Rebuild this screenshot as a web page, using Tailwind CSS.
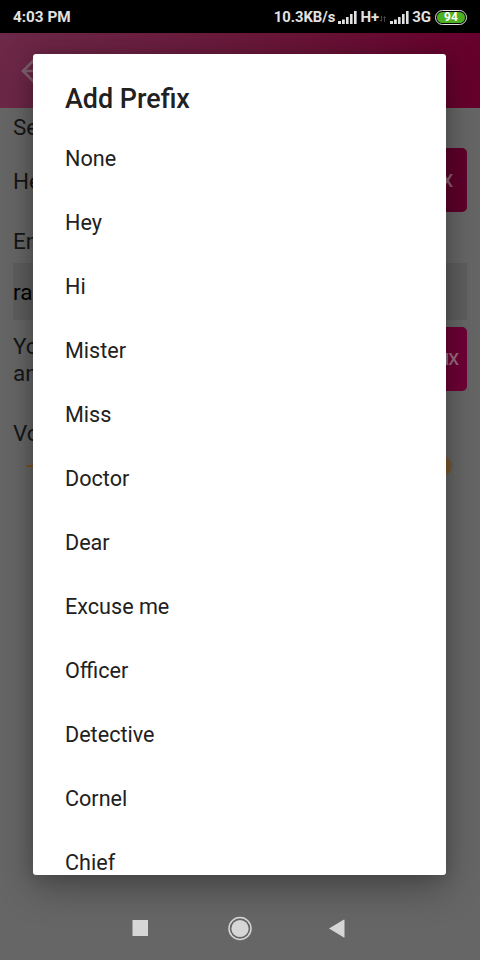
<!DOCTYPE html>
<html lang="en">
<head>
    <meta charset="UTF-8">
    <meta name="viewport" content="width=device-width, initial-scale=1.0">
    <title>Add Prefix</title>
    <script src="https://cdn.jsdelivr.net/npm/@tailwindcss/browser@4"></script>
</head>
<body class="relative w-[480px] h-[960px] overflow-hidden flex flex-col bg-[#666666] font-['Roboto',sans-serif] text-[#161616]">
    <!-- status bar -->
    <div id="status-bar" class="h-[33px] shrink-0 bg-black text-[#e2e2e2] flex items-center justify-between pl-[13px] pr-[13px] pt-px text-[15.3px] font-bold leading-none whitespace-nowrap">
        <span class="pt-[2px]">4:03 PM</span>
        <div class="flex items-center">
            <span class="text-[14.8px]">10.3KB/s</span>
            <svg class="w-[19px] h-[14px] ml-[3px]" viewBox="0 0 19 14" fill="currentColor"><path d="M0 11h3v3H0zM4 9.500h2.800V14H4zM8 7h2.600v7H8zM12 4h2.600v10H12zM16 1h2.600v13H16z"/></svg>
            <span class="ml-[3px] text-[15px]">H+</span>
            <svg class="w-[6px] h-[6px] mt-1 ml-[1px]" viewBox="0 0 6 6" fill="none" stroke="#444444"><path d="M1.500 0v5M0 4l1.500 1.500M4.500 6V1M3.500 1.500L4.500 .5 6 2"/></svg>
            <svg class="w-[19px] h-[14px] ml-[4px]" viewBox="0 0 19 14" fill="currentColor"><path d="M0 11h3v3H0zM4 9.500h2.800V14H4zM8 7h2.600v7H8zM12 4h2.600v10H12zM16 1h2.600v13H16z"/></svg>
            <span class="ml-[3px] text-[15px]">3G</span>
            <span class="ml-[4px] w-[32px] h-[15px] rounded-full border border-[#e2e2e2] bg-black p-[1px] flex">
                <span class="flex-1 rounded-full bg-[#4bb022] text-white text-[12px] flex items-center justify-center">94</span>
            </span>
        </div>
    </div>

    <!-- app bar -->
    <div id="app-bar" class="h-[75px] shrink-0 bg-linear-to-r from-[#6c2848] to-[#66002c] flex items-center pl-[21px]">
        <svg class="w-[24px] h-[24px]" viewBox="0 0 24 24" fill="none" stroke="#7f5f6d" stroke-width="2.600"><path d="M13 1L2 12l11 11M2 12h22"/></svg>
    </div>

    <!-- page content -->
    <div id="content" class="px-[13px] flex flex-col text-[22.500px] leading-[27px]">
        <p class="pt-[6px]">Se</p>
        <div class="mt-[7px] flex items-center justify-between">
            <span class="pt-[2px]">He</span>
            <button class="w-[160px] h-[64px] rounded-[5px] bg-[#5e002b] text-[#8f6078] text-[18px] font-medium text-right pr-[14px]">X</button>
        </div>
        <p class="mt-[16px]">En</p>
        <div class="mt-[8px] h-[57px] bg-[#5e5e5e] flex items-center pt-px text-black">ra</div>
        <div class="mt-[7px] flex items-center justify-between">
            <span class="pt-[2px]">Yo<br>an</span>
            <button class="w-[160px] h-[64px] rounded-[5px] bg-[#6e0036] text-[#9c6c82] text-[17px] font-medium text-right pr-[8px]"><span class="-mr-[1px]">I</span>X</button>
        </div>
        <p class="mt-[29px]">Vo</p>
        <div class="ml-[13px] mr-[15px] mt-[9px] h-[20px] flex items-center">
            <span class="flex-1 h-[2px] bg-[#785322]"></span>
            <span class="w-[20px] h-[20px] rounded-full bg-[#785a30]"></span>
        </div>
    </div>

    <!-- prefix dialog -->
    <div id="prefix-dialog" class="absolute left-[33px] top-[54px] w-[413px] h-[821px] rounded-[3px] bg-white text-[#212121] overflow-hidden shadow-[0_14px_36px_rgba(0,0,0,0.3),0_0_16px_rgba(0,0,0,0.16)]">
        <h2 class="pl-[32px] pt-[25px] h-[72px] text-[26.900px] leading-[40px] font-medium">Add Prefix</h2>
        <ul class="pt-px pl-[32px] text-[21.600px]">
            <li class="h-[64px] flex items-center">None</li>
            <li class="h-[64px] flex items-center">Hey</li>
            <li class="h-[64px] flex items-center">Hi</li>
            <li class="h-[64px] flex items-center">Mister</li>
            <li class="h-[64px] flex items-center">Miss</li>
            <li class="h-[64px] flex items-center">Doctor</li>
            <li class="h-[64px] flex items-center">Dear</li>
            <li class="h-[64px] flex items-center">Excuse me</li>
            <li class="h-[64px] flex items-center">Officer</li>
            <li class="h-[64px] flex items-center">Detective</li>
            <li class="h-[64px] flex items-center">Cornel</li>
            <li class="h-[64px] flex items-center">Chief</li>
        </ul>
    </div>

    <!-- navigation bar -->
    <div id="nav-bar" class="relative mt-auto h-[64px] shrink-0 flex items-center justify-center gap-[77.500px] pr-[4px] text-[#d6d6d6]">
        <svg class="w-[20px] h-[24px]" viewBox="0 0 20 24" fill="currentColor"><path d="M2.500 4h15.500v16H2.500z"/></svg>
        <svg class="w-[24px] h-[24px] overflow-visible" viewBox="0 0 24 24"><circle cx="12" cy="12.500" r="11" fill="none" stroke="currentColor" stroke-width="1.500"/><circle cx="12" cy="12.500" r="8.600" fill="currentColor"/></svg>
        <svg class="w-[17px] h-[24px]" viewBox="0 0 17 24" fill="currentColor"><path d="M0 12.500L15 3.500Q15.500 3.500 15.500 4v17q0 .6-.6.4z"/></svg>
    </div>
</body>
</html>
